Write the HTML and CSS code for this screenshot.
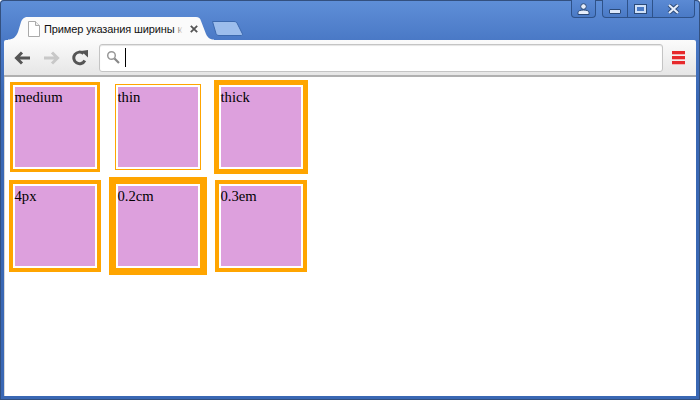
FILE: index.html
```html
<!DOCTYPE html>
<html lang="ru">
<head>
<meta charset="utf-8">
<title>Пример указания ширины</title>
<link rel="stylesheet" href="styles.css">
</head>
<body>
<div class="window">
  <header class="titlebar">
    <div class="tab">
      <svg class="tab-shape" width="212" height="24" viewBox="0 0 212 24"><path d="M4 23.500C9 23.500 12 21 14 16L17 6C18.500 2.500 20 1 24 1H192C195 1 196 2 197 5L202 18C204 22 206 23.500 210 23.500V24H4Z" fill="#fbfbfb"/></svg>
      <svg class="page-icon" width="12" height="16" viewBox="0 0 12 16"><path d="M.5.5H7.500L11.500 4.500V15.500H.5Z" fill="#fff" stroke="#aaa"/><path d="M7.500.5V4.500H11.500" fill="#eee" stroke="#aaa"/></svg>
      <span class="tab-title">Пример указания ширины к</span>
      <span class="tab-fade"></span>
      <svg class="tab-close" width="8" height="8" viewBox="0 0 8 8"><path d="M.8.8L7.200 7.200M7.200.8L.8 7.200" stroke="#555" stroke-width="1.800"/></svg>
    </div>
    <svg class="new-tab" width="31" height="15" viewBox="0 0 31 15"><path d="M.5.5H22C24 .5 25 1.500 25.500 3L30.500 13C30.500 14 30 14.500 29 14.500H7C5 14.500 4.500 13.500 4 12.500Z" fill="#9cbdec" stroke="#3c69ae"/></svg>
    <div class="controls">
      <div class="ctrl ctrl-user"><svg width="13" height="12" viewBox="0 0 13 12"><circle cx="6.500" cy="3.500" r="2.800" fill="#e6eefb" stroke="#2c4a78"/><path d="M1 11.500V9.500C1 8 3 7 6.500 7C10 7 12 8 12 9.500V11.500Z" fill="#e6eefb" stroke="#2c4a78"/></svg></div>
      <div class="ctrl-group">
        <div class="ctrl ctrl-min"><span class="min-bar"></span></div>
        <div class="ctrl ctrl-max"><span class="max-box"></span></div>
        <div class="ctrl ctrl-close"><svg width="13" height="10" viewBox="0 0 13 10"><path d="M2 1L11 9M11 1L2 9" stroke="#2c4a78" stroke-width="4"/><path d="M2 1L11 9M11 1L2 9" stroke="#e6eefb" stroke-width="2.200"/></svg></div>
      </div>
    </div>
  </header>
  <nav class="toolbar">
    <svg class="nav-icon" width="17" height="14" viewBox="0 0 17 14"><path d="M16 7H3M8 1.500L2.500 7L8 12.500" fill="none" stroke="#555" stroke-width="3"/></svg>
    <svg class="nav-icon" width="17" height="14" viewBox="0 0 17 14"><path d="M1 7H14M9 1.500L14.500 7L9 12.500" fill="none" stroke="#c8c8c8" stroke-width="3"/></svg>
    <svg class="nav-icon" width="16" height="16" viewBox="0 0 16 16"><path d="M12.800 10.500A5.800 5.800 0 1 1 11.500 3.600" fill="none" stroke="#555" stroke-width="3"/><path d="M9 1L16 0V7.500Z" fill="#555"/></svg>
    <div class="omnibox">
      <svg width="15" height="15" viewBox="0 0 15 15"><circle cx="5.500" cy="5.500" r="3.800" fill="#fff" stroke="#999" stroke-width="1.500"/><path d="M8.500 8.500L13 13" stroke="#888" stroke-width="2.200"/></svg>
      <span class="caret"></span>
    </div>
    <div class="menu"><span></span><span></span><span></span></div>
  </nav>
  <main class="content">
    <div class="cell"><div class="box b-medium">medium</div></div>
    <div class="cell"><div class="box b-thin">thin</div></div>
    <div class="cell"><div class="box b-thick">thick</div></div>
    <div class="cell"><div class="box b-4px">4px</div></div>
    <div class="cell"><div class="box b-cm">0.2cm</div></div>
    <div class="cell"><div class="box b-em">0.3em</div></div>
  </main>
</div>
</body>
</html>
```
FILE: styles.css
```css
html, body { margin: 0; padding: 0; }
body { width: 700px; height: 400px; overflow: hidden; background: #fff; }
.window {
  width: 700px; height: 400px; box-sizing: border-box;
  display: flex; flex-direction: column;
  padding: 1px 4px 4px 4px;
  border-radius: 4px 4px 0 0;
  background: linear-gradient(to bottom, #5f8fd8 0, #4a79c6 40px, #3a68b4 100px, #3a68b4 100%);
  box-shadow: inset 0 0 0 1px #33507f;
}
.titlebar { height: 39px; flex: none; display: flex; align-items: flex-end; position: relative; }
.tab {
  width: 212px; height: 24px; flex: none; position: relative; box-sizing: border-box;
  display: flex; align-items: center; padding: 2px 0 0 24px;
  font: 11px/14px "Liberation Sans", Arial, sans-serif; color: #111;
}
.tab-shape { position: absolute; left: 0; top: 0; }
.page-icon { position: relative; flex: none; }
.tab-title { position: relative; width: 139px; flex: none; white-space: nowrap; overflow: hidden; margin-left: 4px; letter-spacing: -0.12px; }
.tab-fade { position: absolute; left: 172px; top: 4px; width: 7px; height: 18px; background: linear-gradient(to right, rgba(251,251,251,0.3), #fbfbfb); }
.tab-close { position: relative; flex: none; margin-left: 7px; }
.new-tab { flex: none; margin: 0 0 4px -4px; }
.controls { position: absolute; right: 1px; top: -1px; display: flex; gap: 6px; }
.ctrl { height: 17px; display: flex; align-items: center; justify-content: center; box-sizing: border-box; }
.ctrl-user {
  width: 25px; height: 18px; background: linear-gradient(to bottom, #5b8ad4, #4a7ac6);
  border: 1px solid #2e528a; border-top: none; border-radius: 0 0 4px 4px;
}
.ctrl-group {
  display: flex; height: 18px; box-sizing: border-box;
  background: linear-gradient(to bottom, #5b8ad4, #4a7ac6);
  border: 1px solid #2e528a; border-top: none; border-radius: 0 0 4px 4px;
}
.ctrl-min { width: 25px; border-right: 1px solid #2e528a; }
.ctrl-max { width: 25px; border-right: 1px solid #2e528a; }
.ctrl-close { width: 41px; }
.min-bar { width: 12px; height: 5px; margin-top: 5px; background: #dce8fa; border: 1px solid #2c4a78; box-sizing: border-box; border-radius: 1px; }
.max-box { width: 11px; height: 8px; box-sizing: border-box; border: 2px solid #cfe0f8; outline: 1px solid #2c4a78; background: #4a7ac6; }
.toolbar {
  height: 37px; flex: none; display: flex; align-items: center; box-sizing: border-box;
  background: linear-gradient(to bottom, #fbfbfb, #e6e6e6);
  border-bottom: 2px solid #b0b0b0;
  border-radius: 2px 2px 0 0;
  padding: 0 0 0 10px;
}
.nav-icon { flex: none; margin-right: 12px; }
.nav-icon:nth-of-type(3) { margin-right: 11px; }
.omnibox {
  flex: none; width: 564px; height: 28px; box-sizing: border-box;
  background: #fff; border: 1px solid #c4c4c4; border-radius: 3px;
  box-shadow: inset 0 1px 1px #e4e4e4;
  display: flex; align-items: center; padding-left: 6px; gap: 4px;
}
.caret { width: 1px; height: 19px; background: #000; }
.menu { margin-left: 9px; display: flex; flex-direction: column; gap: 2px; width: 13px; }
.menu span { height: 3px; background: #e6292c; box-shadow: 0 1px 0 #f5b5b5; }
.content {
  flex: 1; background: #fff; display: grid;
  grid-template-columns: repeat(3, 103px); grid-template-rows: repeat(2, 99px);
  align-content: start;
  box-shadow: inset 1px 0 0 #d8d8d8;
}
.cell { display: flex; align-items: center; justify-content: center; box-sizing: border-box; width: 103px; height: 99px; padding-right: 2px; }
.box {
  width: 80px; height: 80px; padding: 2px; flex: none;
  background: #dda0dd; background-clip: content-box;
  border: 0 solid orange;
  font: 14.67px/20px "Liberation Serif", "Times New Roman", serif; color: #000;
}
.b-medium { border-width: 3px; }
.b-thin { border-width: 1px; }
.b-thick { border-width: 5px; }
.b-4px { border-width: 4px; }
.b-cm { border-width: 7px; }
.b-em { border-width: 4px; }
```
